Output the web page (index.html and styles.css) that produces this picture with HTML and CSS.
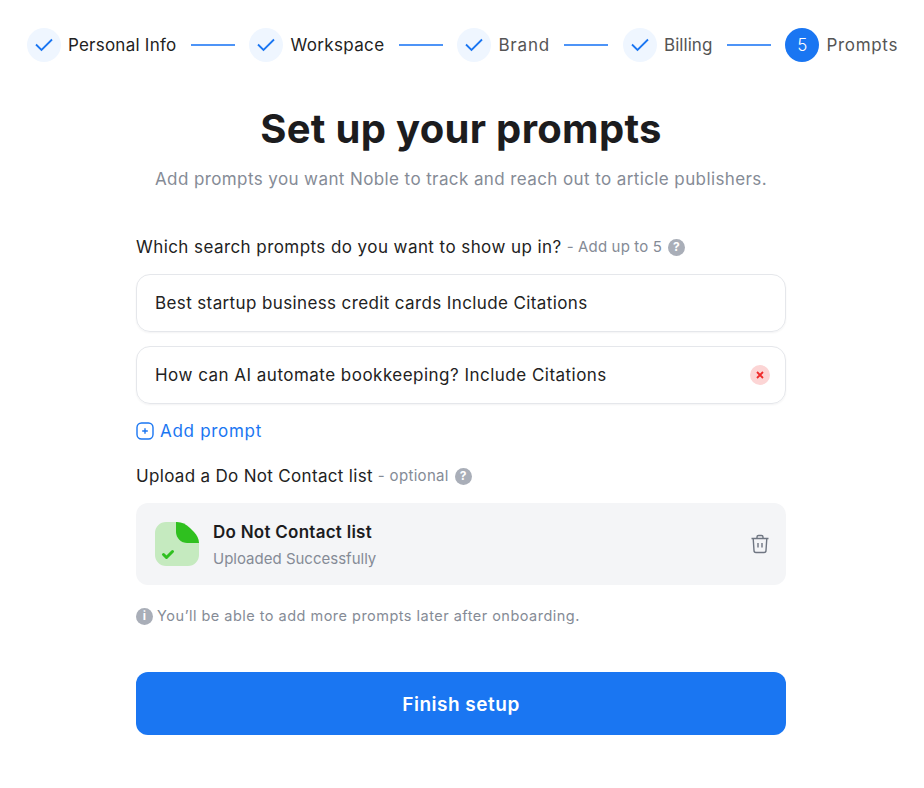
FILE: index.html
```html
<!DOCTYPE html>
<html lang="en">
<head>
    <meta charset="UTF-8">
    <meta name="viewport" content="width=device-width, initial-scale=1.0">
    <title>Set up your prompts</title>
    <link rel="stylesheet" href="styles.css">
</head>
<body>
    <nav class="stepper">
        <div class="step">
            <span class="step-dot"><svg class="check" viewBox="0 0 18 14"><path d="M1 6.5 6.5 12 17 1.5"/></svg></span>
            <span class="step-label step-label-dark label-personal">Personal Info</span>
        </div>
        <span class="step-line"></span>
        <div class="step">
            <span class="step-dot"><svg class="check" viewBox="0 0 18 14"><path d="M1 6.5 6.5 12 17 1.5"/></svg></span>
            <span class="step-label step-label-dark label-workspace">Workspace</span>
        </div>
        <span class="step-line"></span>
        <div class="step">
            <span class="step-dot"><svg class="check" viewBox="0 0 18 14"><path d="M1 6.5 6.5 12 17 1.5"/></svg></span>
            <span class="step-label label-brand">Brand</span>
        </div>
        <span class="step-line"></span>
        <div class="step">
            <span class="step-dot"><svg class="check" viewBox="0 0 18 14"><path d="M1 6.5 6.5 12 17 1.5"/></svg></span>
            <span class="step-label label-billing">Billing</span>
        </div>
        <span class="step-line"></span>
        <div class="step">
            <span class="step-dot step-dot-current">5</span>
            <span class="step-label label-prompts">Prompts</span>
        </div>
    </nav>

    <main class="panel">
        <h1 class="title">Set up your prompts</h1>
        <p class="subtitle">Add prompts you want Noble to track and reach out to article publishers.</p>

        <div class="field-label label-search">
            <span>Which search prompts do you want to show up in?</span>
            <span class="hint">- Add up to 5</span>
            <span class="help">?</span>
        </div>

        <div class="prompt-input">Best startup business credit cards Include Citations</div>
        <div class="prompt-input prompt-input-second">
            <span>How can AI automate bookkeeping? Include Citations</span>
            <span class="remove">
                <svg viewBox="0 0 8 8"><path d="M1 1 7 7M7 1 1 7"/></svg>
            </span>
        </div>

        <a class="add-prompt" href="#">
            <svg viewBox="0 0 18 18"><rect x="1" y="1" width="16" height="16" rx="4.5"/><path d="M9 6.2v5.6M6.2 9h5.6"/></svg>
            Add prompt
        </a>

        <div class="field-label label-upload">
            <span>Upload a Do Not Contact list</span>
            <span class="hint">- optional</span>
            <span class="help">?</span>
        </div>

        <div class="file-card">
            <svg class="file-icon" viewBox="0 0 44 44">
                <path fill="#c5eabf" d="M11 0h10v10a11 11 0 0 0 11 11h12v12a11 11 0 0 1-11 11H11A11 11 0 0 1 0 33V11A11 11 0 0 1 11 0Z"/>
                <path fill="#2fc01f" d="M21 0h1c5 0 9 2 13 6l4 4c3 3 5 7 5 11H32a11 11 0 0 1-11-11Z"/>
                <path fill="none" stroke="#2fc01f" stroke-width="3" stroke-linecap="round" stroke-linejoin="round" d="M8.5 32.5l3 3 6-6"/>
            </svg>
            <div class="file-text">
                <div class="file-name">Do Not Contact list</div>
                <div class="file-status">Uploaded Successfully</div>
            </div>
            <svg class="trash" viewBox="0 0 20 20">
                <path d="M1.5 4.5h17M7 4.5V3a1.5 1.5 0 0 1 1.5-1.5h3A1.5 1.5 0 0 1 13 3v1.5M3.2 4.5l.8 12a2 2 0 0 0 2 2h8a2 2 0 0 0 2-2l.8-12M8 9v4.5M12 9v4.5"/>
            </svg>
        </div>

        <div class="note">
            <span class="note-icon">i</span>
            <span>You’ll be able to add more prompts later after onboarding.</span>
        </div>

        <button class="finish">Finish setup</button>
    </main>
</body>
</html>
```

FILE: styles.css
```css
* {
    box-sizing: border-box;
    font-family: "Inter", "Liberation Sans", sans-serif;
}

body {
    margin: 0;
    padding: 0;
    background: #fff;
    color: #1c1c1e;
}

.stepper {
    display: flex;
    align-items: center;
    justify-content: center;
    padding-top: 28px;
    padding-left: 1px;
}

.step {
    display: flex;
    align-items: center;
    gap: 7px;
}

.step-dot {
    display: flex;
    align-items: center;
    justify-content: center;
    width: 34px;
    height: 34px;
    border-radius: 50%;
    background: #eff6ff;
}

.step-dot-current {
    background: #1a76f2;
    color: #fff;
    font-size: 17px;
    font-weight: 300;
}

.check {
    width: 18px;
    height: 14px;
    fill: none;
    stroke: #1a76f2;
    stroke-width: 1.8;
}

.step-label {
    font-size: 17px;
    color: #555;
}

.step-label-dark {
    color: #222;
}

.label-personal {
    letter-spacing: 0.25px;
}

.label-workspace {
    letter-spacing: 0.35px;
}

.label-brand {
    letter-spacing: 0.8px;
}

.label-billing {
    letter-spacing: 0.05px;
}

.label-prompts {
    letter-spacing: 0.7px;
}

.step-line {
    width: 44px;
    height: 2px;
    margin: 0 14.5px;
    background: #4d94f7;
}

.panel {
    width: 650px;
    margin: 0 0 0 136px;
}

.title {
    margin: 43px 0 0;
    font-size: 40px;
    line-height: 48px;
    font-weight: 700;
    letter-spacing: 0.3px;
    text-align: center;
}

.subtitle {
    margin: 13px 0 0;
    font-size: 17px;
    line-height: 26px;
    letter-spacing: 0.4px;
    text-align: center;
    color: #858b96;
}

.field-label {
    display: flex;
    align-items: center;
    gap: 5px;
    font-size: 17px;
    line-height: 26px;
    color: #222;
}

.label-search {
    margin-top: 42px;
    letter-spacing: 0.43px;
}

.label-search .hint {
    letter-spacing: 0.15px;
}

.label-upload {
    margin-top: 19px;
    letter-spacing: 0.32px;
}

.hint {
    font-size: 15px;
    color: #858b96;
}

.help {
    display: flex;
    align-items: center;
    justify-content: center;
    width: 17px;
    height: 17px;
    margin-left: 1px;
    border-radius: 50%;
    background: #a9aeb8;
    color: #fff;
    font-size: 12px;
    font-weight: 700;
}

.prompt-input {
    display: flex;
    align-items: center;
    justify-content: space-between;
    height: 58px;
    margin-top: 14px;
    padding: 0 15px 0 18px;
    border: 1.5px solid #e5e7eb;
    border-radius: 14px;
    box-shadow: 0 1px 2px rgba(16, 24, 40, 0.05);
    font-size: 17px;
    letter-spacing: 0.38px;
    color: #222;
}

.prompt-input-second {
    margin-top: 14px;
    letter-spacing: 0.48px;
}

.remove {
    display: flex;
    align-items: center;
    justify-content: center;
    width: 20px;
    height: 20px;
    border-radius: 50%;
    background: #fcd5d5;
}

.remove svg {
    width: 8px;
    height: 8px;
    fill: none;
    stroke: #ef2b2b;
    stroke-width: 1.8;
}

.add-prompt {
    display: flex;
    align-items: center;
    gap: 6px;
    margin-top: 14px;
    font-size: 17px;
    line-height: 26px;
    letter-spacing: 0.7px;
    color: #1a76f2;
    text-decoration: none;
}

.add-prompt svg {
    width: 18px;
    height: 18px;
    fill: none;
    stroke: #1a76f2;
    stroke-width: 1.4;
}

.file-card {
    display: flex;
    align-items: center;
    height: 82px;
    margin-top: 14px;
    padding: 0 16px 0 19px;
    border-radius: 12px;
    background: #f4f5f7;
}

.file-icon {
    width: 44px;
    height: 44px;
}

.file-text {
    flex: 1;
    margin-left: 14px;
    padding-top: 2px;
}

.file-name {
    font-size: 17px;
    line-height: 26px;
    font-weight: 600;
    letter-spacing: 0.26px;
}

.file-status {
    margin-top: 2px;
    font-size: 15px;
    line-height: 24px;
    color: #858b96;
}

.trash {
    width: 20px;
    height: 20px;
    fill: none;
    stroke: #6f7682;
    stroke-width: 1.4;
}

.note {
    display: flex;
    align-items: center;
    gap: 4px;
    margin-top: 20px;
    font-size: 14.5px;
    line-height: 22px;
    letter-spacing: 0.48px;
    color: #858b96;
}

.note-icon {
    display: flex;
    align-items: center;
    justify-content: center;
    width: 17px;
    height: 17px;
    border-radius: 50%;
    background: #a9aeb8;
    color: #fff;
    font-size: 12px;
    font-weight: 700;
}

.finish {
    display: block;
    width: 100%;
    height: 63px;
    margin-top: 45px;
    padding-top: 2px;
    border: none;
    border-radius: 12px;
    background: #1a76f2;
    color: #fff;
    font-size: 19px;
    font-weight: 600;
    letter-spacing: 0.5px;
}
```
